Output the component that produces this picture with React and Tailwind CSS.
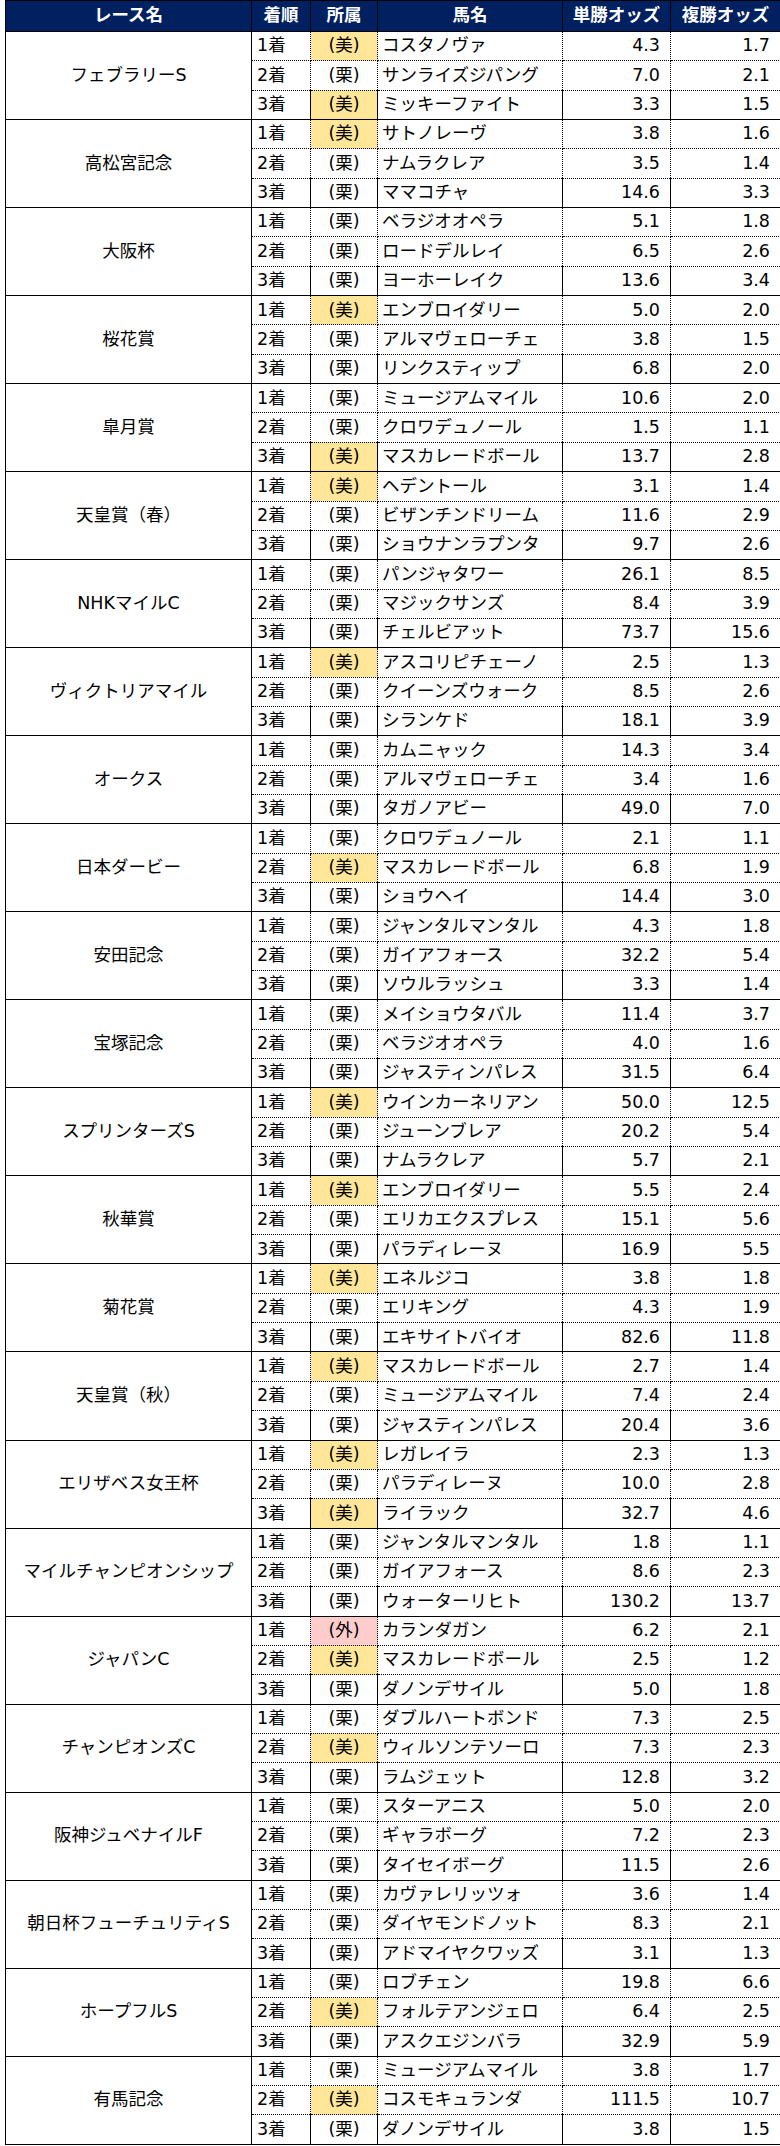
import React from 'react';

const races = [
  ['フェブラリーS', [['美', 'コスタノヴァ', '4.3', '1.7'], ['栗', 'サンライズジパング', '7.0', '2.1'], ['美', 'ミッキーファイト', '3.3', '1.5']]],
  ['高松宮記念', [['美', 'サトノレーヴ', '3.8', '1.6'], ['栗', 'ナムラクレア', '3.5', '1.4'], ['栗', 'ママコチャ', '14.6', '3.3']]],
  ['大阪杯', [['栗', 'ベラジオオペラ', '5.1', '1.8'], ['栗', 'ロードデルレイ', '6.5', '2.6'], ['栗', 'ヨーホーレイク', '13.6', '3.4']]],
  ['桜花賞', [['美', 'エンブロイダリー', '5.0', '2.0'], ['栗', 'アルマヴェローチェ', '3.8', '1.5'], ['栗', 'リンクスティップ', '6.8', '2.0']]],
  ['皐月賞', [['栗', 'ミュージアムマイル', '10.6', '2.0'], ['栗', 'クロワデュノール', '1.5', '1.1'], ['美', 'マスカレードボール', '13.7', '2.8']]],
  ['天皇賞（春）', [['美', 'ヘデントール', '3.1', '1.4'], ['栗', 'ビザンチンドリーム', '11.6', '2.9'], ['栗', 'ショウナンラプンタ', '9.7', '2.6']]],
  ['NHKマイルC', [['栗', 'パンジャタワー', '26.1', '8.5'], ['栗', 'マジックサンズ', '8.4', '3.9'], ['栗', 'チェルビアット', '73.7', '15.6']]],
  ['ヴィクトリアマイル', [['美', 'アスコリピチェーノ', '2.5', '1.3'], ['栗', 'クイーンズウォーク', '8.5', '2.6'], ['栗', 'シランケド', '18.1', '3.9']]],
  ['オークス', [['栗', 'カムニャック', '14.3', '3.4'], ['栗', 'アルマヴェローチェ', '3.4', '1.6'], ['栗', 'タガノアビー', '49.0', '7.0']]],
  ['日本ダービー', [['栗', 'クロワデュノール', '2.1', '1.1'], ['美', 'マスカレードボール', '6.8', '1.9'], ['栗', 'ショウヘイ', '14.4', '3.0']]],
  ['安田記念', [['栗', 'ジャンタルマンタル', '4.3', '1.8'], ['栗', 'ガイアフォース', '32.2', '5.4'], ['栗', 'ソウルラッシュ', '3.3', '1.4']]],
  ['宝塚記念', [['栗', 'メイショウタバル', '11.4', '3.7'], ['栗', 'ベラジオオペラ', '4.0', '1.6'], ['栗', 'ジャスティンパレス', '31.5', '6.4']]],
  ['スプリンターズS', [['美', 'ウインカーネリアン', '50.0', '12.5'], ['栗', 'ジューンブレア', '20.2', '5.4'], ['栗', 'ナムラクレア', '5.7', '2.1']]],
  ['秋華賞', [['美', 'エンブロイダリー', '5.5', '2.4'], ['栗', 'エリカエクスプレス', '15.1', '5.6'], ['栗', 'パラディレーヌ', '16.9', '5.5']]],
  ['菊花賞', [['美', 'エネルジコ', '3.8', '1.8'], ['栗', 'エリキング', '4.3', '1.9'], ['栗', 'エキサイトバイオ', '82.6', '11.8']]],
  ['天皇賞（秋）', [['美', 'マスカレードボール', '2.7', '1.4'], ['栗', 'ミュージアムマイル', '7.4', '2.4'], ['栗', 'ジャスティンパレス', '20.4', '3.6']]],
  ['エリザベス女王杯', [['美', 'レガレイラ', '2.3', '1.3'], ['栗', 'パラディレーヌ', '10.0', '2.8'], ['美', 'ライラック', '32.7', '4.6']]],
  ['マイルチャンピオンシップ', [['栗', 'ジャンタルマンタル', '1.8', '1.1'], ['栗', 'ガイアフォース', '8.6', '2.3'], ['栗', 'ウォーターリヒト', '130.2', '13.7']]],
  ['ジャパンC', [['外', 'カランダガン', '6.2', '2.1'], ['美', 'マスカレードボール', '2.5', '1.2'], ['栗', 'ダノンデサイル', '5.0', '1.8']]],
  ['チャンピオンズC', [['栗', 'ダブルハートボンド', '7.3', '2.5'], ['美', 'ウィルソンテソーロ', '7.3', '2.3'], ['栗', 'ラムジェット', '12.8', '3.2']]],
  ['阪神ジュベナイルF', [['栗', 'スターアニス', '5.0', '2.0'], ['栗', 'ギャラボーグ', '7.2', '2.3'], ['栗', 'タイセイボーグ', '11.5', '2.6']]],
  ['朝日杯フューチュリティS', [['栗', 'カヴァレリッツォ', '3.6', '1.4'], ['栗', 'ダイヤモンドノット', '8.3', '2.1'], ['栗', 'アドマイヤクワッズ', '3.1', '1.3']]],
  ['ホープフルS', [['栗', 'ロブチェン', '19.8', '6.6'], ['美', 'フォルテアンジェロ', '6.4', '2.5'], ['栗', 'アスクエジンバラ', '32.9', '5.9']]],
  ['有馬記念', [['栗', 'ミュージアムマイル', '3.8', '1.7'], ['美', 'コスモキュランダ', '111.5', '10.7'], ['栗', 'ダノンデサイル', '3.8', '1.5']]],
];

function affColor(a) {
  if (a === '美') return 'bg-[#ffe699]';
  if (a === '外') return 'bg-[#ffcccc]';
  return 'bg-white';
}

function App() {
  return (
    <div className="bg-white pl-[5px] font-['DejaVu_Sans','Noto_Sans_CJK_JP',sans-serif] text-[17.5px] text-black">
      <table className="table-fixed border-collapse w-[775px]">
        <colgroup>
          <col className="w-[246px]" />
          <col className="w-[59px]" />
          <col className="w-[67px]" />
          <col className="w-[185px]" />
          <col className="w-[108px]" />
          <col className="w-[110px]" />
        </colgroup>
        <thead>
          <tr className="h-[31px] bg-[#002060] text-white font-bold leading-none">
            <th className="border border-black text-center">レース名</th>
            <th className="border border-black text-center">着順</th>
            <th className="border border-black text-center">所属</th>
            <th className="border border-black text-center">馬名</th>
            <th className="border border-black text-center">単勝オッズ</th>
            <th className="border border-black text-center">複勝オッズ</th>
          </tr>
        </thead>
        <tbody>
          {races.map(([race, horses]) =>
            horses.map((h, i) => {
              const last = i === 2;
              const bottom = last ? 'border-b border-b-black border-solid' : 'border-b border-b-black border-dotted';
              return (
                <tr key={race + i} className="h-[29.35px] leading-none">
                  {i === 0 && (
                    <td rowSpan={3} className="border border-black text-center align-middle">
                      {race}
                    </td>
                  )}
                  <td className={`border-x border-x-black ${bottom} pl-[5px] align-middle`}>{i + 1}着</td>
                  <td className={`border-x border-x-black ${bottom} text-center align-middle ${affColor(h[0])}`}>({h[0]})</td>
                  <td className={`border-x border-x-black ${bottom} pl-[4px] align-middle whitespace-nowrap`}>{h[1]}</td>
                  <td className={`border-x border-x-black ${bottom} pr-[10px] text-right align-middle`}>{h[2]}</td>
                  <td className={`border-x border-x-black ${bottom} pr-[10px] text-right align-middle`}>{h[3]}</td>
                </tr>
              );
            })
          )}
        </tbody>
      </table>
    </div>
  );
}

export default App;
